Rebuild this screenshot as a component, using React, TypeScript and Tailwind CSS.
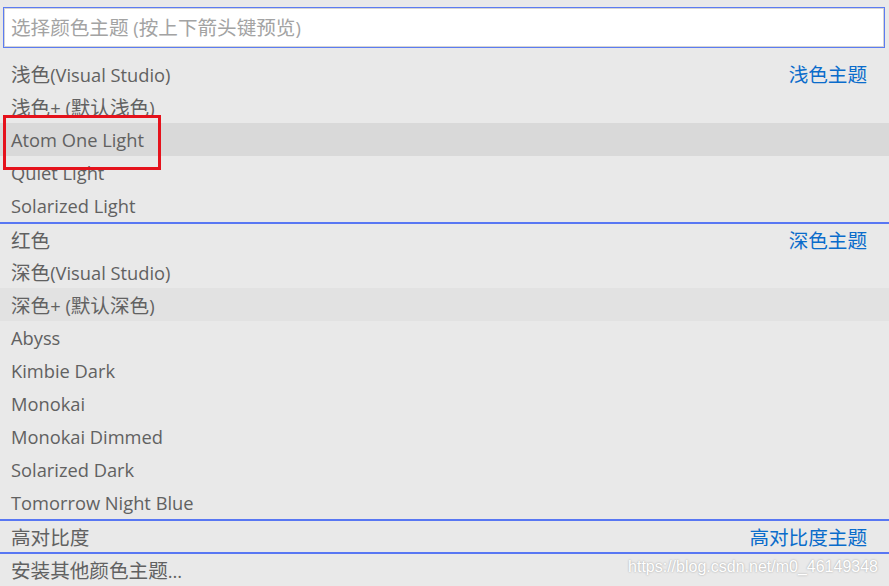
const light = ["浅色(Visual Studio)", "浅色+ (默认浅色)", "Atom One Light", "Quiet Light", "Solarized Light"];
const dark = [
  "红色",
  "深色(Visual Studio)",
  "深色+ (默认深色)",
  "Abyss",
  "Kimbie Dark",
  "Monokai",
  "Monokai Dimmed",
  "Solarized Dark",
  "Tomorrow Night Blue",
];

// CJK glyphs in the reference run a touch larger than the latin ones
function Mixed({ text }: { text: string }) {
  const parts = text.split(/([\u4e00-\u9fff]+)/).filter(Boolean);
  return (
    <>
      {parts.map((p, i) =>
        /[\u4e00-\u9fff]/.test(p) ? (
          <span key={i} className="text-[19.6px]">
            {p}
          </span>
        ) : (
          <span key={i}>{p}</span>
        ),
      )}
    </>
  );
}

function Row({
  label,
  tag,
  sep,
  tone,
}: {
  label: string;
  tag?: string;
  sep?: boolean;
  tone?: "focus" | "hover";
}) {
  const bg = tone === "focus" ? "bg-[#d9d9d9]" : tone === "hover" ? "bg-[#e2e2e2]" : "";
  return (
    <div
      className={`flex h-[33px] items-center justify-between pl-[11px] pr-[22px] pt-[2px] ${sep ? "border-t-2 border-[#5877f3]" : ""} ${bg}`}
    >
      <span className="text-[#616161]">
        <Mixed text={label} />
      </span>
      {tag && <span className="text-[19.6px] text-[#0a6ccb]">{tag}</span>}
    </div>
  );
}

export default function App() {
  return (
    <div
      className="relative h-[586px] w-[889px] overflow-hidden bg-[#e9e9e9] text-[18.3px] leading-none"
      style={{ fontFamily: '"Segoe UI", "Open Sans", "Noto Sans CJK SC", sans-serif' }}
    >
      <div className="pl-[3px] pr-[4px] pt-[7px]">
        <div className="flex h-[41px] items-center border border-[#5c7cf2] bg-white pl-[7px] pt-px shadow-[inset_0_0_0_1px_#d4d4d4]">
          <span className="text-[#a3a3a3]">
            <Mixed text="选择颜色主题 (按上下箭头键预览)" />
          </span>
        </div>
      </div>

      <div className="mt-[9px]">
        {light.map((l, i) => (
          <Row key={l} label={l} tag={i === 0 ? "浅色主题" : undefined} tone={i === 2 ? "focus" : undefined} />
        ))}
        {dark.map((l, i) => (
          <Row
            key={l}
            label={l}
            sep={i === 0}
            tag={i === 0 ? "深色主题" : undefined}
            tone={i === 2 ? "hover" : undefined}
          />
        ))}
        <Row label="高对比度" tag="高对比度主题" sep />
        <Row label="安装其他颜色主题..." sep />
      </div>

      {/* annotation box */}
      <div className="absolute left-[3px] top-[115px] h-[55px] w-[158px] border-[3px] border-[#e5121c]" />

      <div
        className="absolute right-[11px] top-[559px] text-[16px] text-white [text-shadow:0_0_2px_#9a9a9a]"
        style={{ fontFamily: '"Liberation Sans", Arial, sans-serif' }}
      >
        https://blog.csdn.net/m0_46149348
      </div>
    </div>
  );
}
